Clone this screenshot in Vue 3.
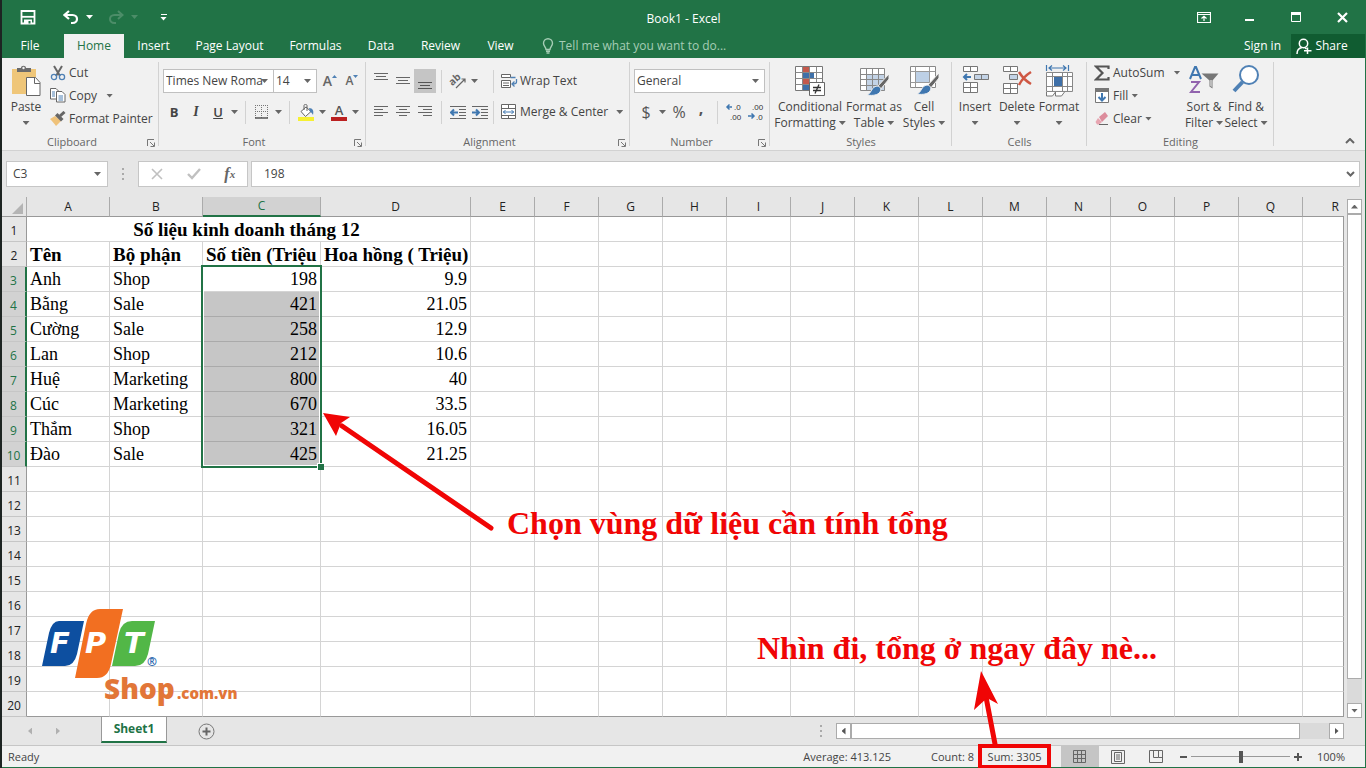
<script setup>
import { ref } from 'vue'

const tabs = ['File', 'Home', 'Insert', 'Page Layout', 'Formulas', 'Data', 'Review', 'View']
const columns = 'ABCDEFGHIJKLMNOPQR'.split('')
const blankColumns = columns.slice(4)
const people = [
  ['Anh', 'Shop', '198', '9.9'],
  ['Bằng', 'Sale', '421', '21.05'],
  ['Cường', 'Sale', '258', '12.9'],
  ['Lan', 'Shop', '212', '10.6'],
  ['Huệ', 'Marketing', '800', '40'],
  ['Cúc', 'Marketing', '670', '33.5'],
  ['Thắm', 'Shop', '321', '16.05'],
  ['Đào', 'Sale', '425', '21.25'],
]
const emptyRows = Array.from({ length: 10 }, (_, i) => i + 11)
const cellName = ref('C3')
const formula = ref('198')
const zoom = ref(50)
</script>

<template>
  <div class="window">
    <header class="titlebar">
      <div class="quick">
        <button class="q" aria-label="Save">
          <svg width="16" height="16" viewBox="0 0 16 16"><path d="M1.500 2h13v12.500H1.500z" fill="none" stroke="#fff" stroke-width="1.800" /><path d="M2 7.800h12" stroke="#fff" stroke-width="1.800" /><path d="M4 10.500h8v4H4z" fill="#fff" /><path d="M8.500 12h2v2.500h-2z" fill="#217346" /></svg>
        </button>
        <button class="q undo" aria-label="Undo">
          <svg width="16" height="15" viewBox="0 0 16 15"><path d="M6 1 1.500 5 6 9M2 5h7.500c6 0 6 8 0 8H8" fill="none" stroke="#fff" stroke-width="2.200" /></svg>
          <i class="caret light"></i>
        </button>
        <button class="q redo" aria-label="Redo">
          <svg width="16" height="15" viewBox="0 0 16 15"><path d="M10 1l4.500 4L10 9M14 5H6.500c-6 0-6 8 0 8H8" fill="none" stroke="#4c8d68" stroke-width="2" /></svg>
          <i class="caret dim"></i>
        </button>
        <button class="q customize" aria-label="Customize Quick Access Toolbar"><span class="bar"></span><i class="caret light"></i></button>
      </div>
      <div class="title">Book1 - Excel</div>
      <div class="controls">
        <button aria-label="Ribbon display options"><svg width="14" height="11" viewBox="0 0 14 11"><path d="M.5.5h13v10H.500zM.5 2.500h13M7 9V4.500M4.500 6.500 7 4.200l2.500 2.300" fill="none" stroke="#fff" stroke-width="1.200" /></svg></button>
        <button aria-label="Minimize"><svg width="10" height="11" viewBox="0 0 10 11"><path d="M0 8h9" stroke="#fff" stroke-width="2" /></svg></button>
        <button aria-label="Maximize"><svg width="10" height="11" viewBox="0 0 10 11"><path d="M.5.500h9v9h-9zM0 2h10" fill="none" stroke="#fff" /><path d="M0 0h10v3H0z" fill="#fff" /></svg></button>
        <button aria-label="Close"><svg width="11" height="11" viewBox="0 0 11 11"><path d="M1 1l9 9M10 1l-9 9" stroke="#fff" stroke-width="2.200" /></svg></button>
      </div>
    </header>

    <nav class="tabs">
      <button v-for="t in tabs" :key="t" class="tab" :class="[t.toLowerCase().replace(' ', '-'), { active: t === 'Home' }]">{{ t }}</button>
      <button class="tell">
        <svg width="12" height="16" viewBox="0 0 12 16"><path d="M4 11.500C4 9 1.500 8 1.500 5.200a4.500 4.500 0 0 1 9 0C10.500 8 8 9 8 11.500zM4 13.200h4M4.500 15h3" fill="none" stroke="#a5cdb5" stroke-width="1.400" /></svg>
        Tell me what you want to do...
      </button>
      <a href="#" class="signin">Sign in</a>
      <button class="share">
        <svg width="16" height="17" viewBox="0 0 16 17"><circle cx="7.500" cy="5.500" r="4.200" fill="none" stroke="#fff" stroke-width="1.500" /><path d="M1 16c0-4 2-6 5-6.500M9 10l1.500 1M11.500 9.500v6.500M8 12.800h7.500" fill="none" stroke="#fff" stroke-width="1.500" /></svg>
        Share
      </button>
    </nav>

    <section class="ribbon">
      <div class="group clipboard">
        <div class="body">
          <button class="big">
            <svg width="30" height="32" viewBox="0 0 30 32"><path d="M1 4h24v25H1z" fill="#efc679" /><path d="M6 7V3h4c0-3 5-3 5 0h5v4z" fill="#6b6b6b" /><circle cx="12.500" cy="3" r="1.200" fill="#f1f1f1" /><path d="M15.500 12.500h9l4.500 5v13H15.500z" fill="#fff" stroke="#666" /><path d="M23.500 12.500v6H29" fill="none" stroke="#666" /></svg>
            <span>Paste</span><i class="caret"></i>
          </button>
          <div class="stack">
            <button class="line">
              <svg width="16" height="16" viewBox="0 0 16 16"><path d="M4 1l6 10M12 1 6 11" stroke="#666" stroke-width="2" /><circle cx="4" cy="12" r="2.600" fill="none" stroke="#4f81b5" stroke-width="1.300" /><circle cx="12" cy="12" r="2.600" fill="none" stroke="#4f81b5" stroke-width="1.300" /></svg>Cut
            </button>
            <button class="line">
              <svg width="16" height="15" viewBox="0 0 16 15"><path d="M.5.500H6l2.500 2.500v8h-8z" fill="#fff" stroke="#666" /><path d="M6.500 3.500H12l3 3v7.500H6.500z" fill="#fff" stroke="#666" /><path d="M2 4h3M2 6h3M2 8h3M8.500 8h4.500M8.500 10h4.500M8.500 12h4.500" stroke="#4f81b5" /></svg>Copy<i class="caret far"></i>
            </button>
            <button class="line">
              <svg width="16" height="15" viewBox="0 0 16 15"><path d="M0 8l5-3 6 5-5 5C4 12 2 10 0 8z" fill="#efc27a" /><path d="M5 4.500 7.500 2l6 6-2.500 2.500z" fill="#666" /><path d="M10 5l4.500-4" stroke="#666" stroke-width="3" /></svg>Format Painter
            </button>
          </div>
        </div>
        <div class="label">Clipboard<svg class="launch" width="8" height="8" viewBox="0 0 8 8"><path d="M.5 7V.500H7M3 3l4 4M7.500 3.500v4h-4" fill="none" stroke="#777" /></svg></div>
      </div>

      <div class="group font">
        <div class="rows">
          <div class="row">
            <span class="pick family"><select aria-label="Font"><option>Times New Roma</option></select><i class="caret"></i></span>
            <span class="pick size"><select aria-label="Font size"><option>14</option></select><i class="caret"></i></span>
            <button class="ib grow" aria-label="Increase font size"><b>A</b><svg width="5" height="3" viewBox="0 0 5 3"><path d="M0 3h5L2.500 0z" fill="#4f81b5" /></svg></button>
            <button class="ib shrink" aria-label="Decrease font size"><b>A</b><svg width="5" height="3" viewBox="0 0 5 3"><path d="M0 0h5L2.500 3z" fill="#4f81b5" /></svg></button>
          </div>
          <div class="row">
            <button class="ib bold">B</button><button class="ib italic">I</button><button class="ib under">U</button><button class="drop" aria-label="Underline styles"><i class="caret"></i></button>
            <i class="sep"></i>
            <button class="ib" aria-label="Borders"><svg width="14" height="14" viewBox="0 0 14 14"><path d="M.5 0v13M6.500 0v13M12.500 0v13M0 .5h13M0 6.500h13" stroke="#777" stroke-dasharray="1 1" /><path d="M0 13h13" stroke="#555" stroke-width="1.500" /></svg></button><button class="drop" aria-label="Border styles"><i class="caret"></i></button>
            <i class="sep"></i>
            <button class="ib" aria-label="Fill color"><svg width="17" height="17" viewBox="0 0 17 17"><path d="M0 13h16v4H0z" fill="#f6f032" /><path d="M3 7.500 8 3l5 4.500-5.500 5z" fill="#fff" stroke="#666" /><path d="M6 6V1.500c0-1.500 3-1.500 3 0V7" fill="none" stroke="#666" /><path d="M11 4c4 0 5 3 4 7-1-2-2-3-3-3z" fill="#4f81b5" /></svg></button><button class="drop" aria-label="Fill colors"><i class="caret"></i></button>
            <button class="ib" aria-label="Font color"><span class="ink">A</span></button><button class="drop" aria-label="Font colors"><i class="caret"></i></button>
          </div>
        </div>
        <div class="label">Font<svg class="launch" width="8" height="8" viewBox="0 0 8 8"><path d="M.5 7V.500H7M3 3l4 4M7.500 3.500v4h-4" fill="none" stroke="#777" /></svg></div>
      </div>

      <div class="group alignment">
        <div class="rows">
          <div class="row">
            <button class="ib" aria-label="Top align"><svg width="14" height="18" viewBox="0 0 14 18"><path d="M0 1.500h14M2 4.500h10M0 7.500h14" stroke="#666" /></svg></button>
            <button class="ib" aria-label="Middle align"><svg width="14" height="18" viewBox="0 0 14 18"><path d="M0 5.500h14M2 8.500h10M0 11.500h14" stroke="#666" /></svg></button>
            <button class="ib on" aria-label="Bottom align"><svg width="14" height="18" viewBox="0 0 14 18"><path d="M0 10.500h14M2 13.500h10M0 16.500h14" stroke="#555" /></svg></button>
            <i class="sep"></i>
            <button class="ib" aria-label="Orientation"><svg class="open" width="18" height="16" viewBox="0 0 18 16"><text x="1" y="11" transform="rotate(-42 5 9)" font-size="10" font-weight="700" font-family="Open Sans, sans-serif" fill="#666">ab</text><path d="M7 15 16 6M12.500 6H16v3.500" fill="none" stroke="#666" stroke-width="1.200" /></svg></button><button class="drop" aria-label="Orientation options"><i class="caret"></i></button>
            <i class="sep wide"></i>
            <button class="line wrap"><svg width="17" height="17" viewBox="0 0 17 17"><path d="M.5 1.500h9v3h-9zM.5 7.500h9v7h-9z" fill="#fff" stroke="#666" /><path d="M2 10h6M2 12.500h6" stroke="#666" /><path d="M9.500 4.500h5M15.500 6v3c0 1.500-1 2-4 2M13.500 8.500 11 11l2.500 2.500" fill="none" stroke="#4f81b5" stroke-width="1.300" /></svg>Wrap Text</button>
          </div>
          <div class="row">
            <button class="ib" aria-label="Align left"><svg width="14" height="12" viewBox="0 0 14 12"><path d="M0 .5h14M0 3.500h9M0 6.500h14M0 9.500h9" stroke="#666" /></svg></button>
            <button class="ib" aria-label="Center"><svg width="14" height="12" viewBox="0 0 14 12"><path d="M0 .5h14M3 3.500h8M0 6.500h14M3 9.500h8" stroke="#666" /></svg></button>
            <button class="ib" aria-label="Align right"><svg width="14" height="12" viewBox="0 0 14 12"><path d="M0 .5h14M5 3.500h9M0 6.500h14M5 9.500h9" stroke="#666" /></svg></button>
            <i class="sep"></i>
            <button class="ib" aria-label="Decrease indent"><svg width="16" height="13" viewBox="0 0 16 13"><path d="M0 .5h16M9 3.500h7M9 6.500h7M9 9.500h7M0 12.500h16" stroke="#666" /><path d="M1 6.500h7M4 3.500l-3 3 3 3" fill="none" stroke="#3f77b0" stroke-width="2" /></svg></button>
            <button class="ib" aria-label="Increase indent"><svg width="16" height="13" viewBox="0 0 16 13"><path d="M0 .5h16M9 3.500h7M9 6.500h7M9 9.500h7M0 12.500h16" stroke="#666" /><path d="M0 6.500h7M4 3.500l3 3-3 3" fill="none" stroke="#3f77b0" stroke-width="2" /></svg></button>
            <i class="sep blank"></i>
            <button class="line"><svg width="17" height="16" viewBox="0 0 17 16"><path d="M.5.500h14v14H.500zM.5 4.500h14M.5 11.500h14M7.500.5v4M7.500 11.500v3" fill="#fff" stroke="#666" /><path d="M2 8h11M4.500 6 2.500 8l2 2M10.500 6l2 2-2 2" fill="none" stroke="#3f77b0" /></svg>Merge &amp; Center<i class="caret far"></i></button>
          </div>
        </div>
        <div class="label">Alignment<svg class="launch" width="8" height="8" viewBox="0 0 8 8"><path d="M.5 7V.500H7M3 3l4 4M7.500 3.500v4h-4" fill="none" stroke="#777" /></svg></div>
      </div>

      <div class="group number">
        <div class="rows">
          <div class="row"><span class="pick format"><select aria-label="Number format"><option>General</option></select><i class="caret"></i></span></div>
          <div class="row">
            <button class="ib sym">$</button><button class="drop" aria-label="Accounting formats"><i class="caret"></i></button>
            <button class="ib sym">%</button><button class="ib sym comma">,</button>
            <i class="sep"></i>
            <button class="ib" aria-label="Increase decimal"><svg class="open" width="16" height="18" viewBox="0 0 16 18"><g font-family="Liberation Sans, sans-serif" font-size="8" fill="#333"><text x="8" y="7">.0</text><text x="4" y="17">.00</text></g><path d="M6 4H1M3.500 1.500 1 4l2.500 2.500" fill="none" stroke="#3f77b0" stroke-width="1.500" /></svg></button>
            <button class="ib" aria-label="Decrease decimal"><svg class="open" width="16" height="18" viewBox="0 0 16 18"><g font-family="Liberation Sans, sans-serif" font-size="8" fill="#333"><text x="4" y="7">.00</text><text x="8" y="17">.0</text></g><path d="M0 13h6M3.500 10.500 6 13l-2.500 2.500" fill="none" stroke="#3f77b0" stroke-width="1.500" /></svg></button>
          </div>
        </div>
        <div class="label">Number<svg class="launch" width="8" height="8" viewBox="0 0 8 8"><path d="M.5 7V.500H7M3 3l4 4M7.500 3.500v4h-4" fill="none" stroke="#777" /></svg></div>
      </div>

      <div class="group styles">
        <div class="body">
          <button class="big w70">
            <svg width="32" height="32" viewBox="0 0 32 32"><path d="M1.500 1.500h27v24h-27z" fill="#fff" stroke="#777" /><path d="M9 2h6v6H9zM9 14h7v6H9z" fill="#c4594c" /><path d="M9 8h11v6H9z" fill="#3f70a8" /><path d="M9 20h6v5H9z" fill="#3f70a8" /><path d="M1.500 7.500h27M1.500 13.500h27M1.500 19.500h27M8.500 1.500v24M15.500 1.500v24M22.500 1.500v24" stroke="#888" /><path d="M15.500 17.500h15v13h-15z" fill="#fff" stroke="#666" /><path d="M19 22.500h8M19 25.500h8M25 19.500l-4 9" stroke="#333" stroke-width="1.300" /></svg>
            <span>Conditional</span><span>Formatting<i class="caret"></i></span>
          </button>
          <button class="big w56">
            <svg width="32" height="32" viewBox="0 0 32 32"><path d="M2.500 3.500h24v22h-24z" fill="#fff" /><path d="M9 9h18v17H9z" fill="#c3d3e6" /><path d="M2.500 3.500h24v22h-24zM2.500 9.500h24M2.500 14.500h24M2.500 20.500h24M8.500 3.500v22M14.500 3.500v22M20.500 3.500v22" fill="none" stroke="#888" /><path d="M31 9 19 22l3 3 9-11z" fill="#666" stroke="#f1f1f1" /><path d="M19 21c3 0 5 3 3 6-2 3-7 4-13 3 5-2 4-8 10-9z" fill="#3f77b0" stroke="#f1f1f1" /></svg>
            <span>Format as</span><span>Table<i class="caret"></i></span>
          </button>
          <button class="big w42">
            <svg width="32" height="32" viewBox="0 0 32 32"><path d="M2.500 1.500h25v21h-25z" fill="#fff" stroke="#888" /><path d="M2.500 6.500h25M2.500 17.500h25M7.500 1.500v21M21.500 1.500v21" stroke="#999" /><path d="M8 7h13v10H8z" fill="#bdd0e6" /><path d="M31 8 19 21l3 3 9-11z" fill="#666" stroke="#f1f1f1" /><path d="M19 20c3 0 5 3 3 6-2 3-7 4-13 3 5-2 4-8 10-9z" fill="#3f77b0" stroke="#f1f1f1" /></svg>
            <span>Cell</span><span>Styles<i class="caret"></i></span>
          </button>
        </div>
        <div class="label">Styles</div>
      </div>

      <div class="group cells">
        <div class="body">
          <button class="big w42">
            <svg width="28" height="32" viewBox="0 0 28 32"><path d="M2.500 1.500h14v5h-14zM9.500 1.500v5M2.500 17.500h14v10h-14zM2.500 22.500h14M9.500 17.500v10" fill="#fff" stroke="#777" /><path d="M13.500 9.500h14v5h-14zM20.500 9.500v5" fill="#c3d3e6" stroke="#777" /><path d="M3 12h7M6 9l-3 3 3 3" fill="none" stroke="#3f77b0" stroke-width="2" /></svg>
            <span>Insert</span><i class="caret"></i>
          </button>
          <button class="big w42">
            <svg width="30" height="32" viewBox="0 0 30 32"><path d="M1.500 1.500h14v5h-14zM8.500 1.500v5M1.500 18.500h14v10h-14zM1.500 23.500h14M8.500 18.500v10" fill="#fff" stroke="#777" /><path d="M7.500 9.500h8v5h-8z" fill="#c3d3e6" stroke="#777" /><path d="M17 7c3 5 7 9 12 12M29 7c-5 3-9 7-12 13" fill="none" stroke="#cf5743" stroke-width="2.500" /></svg>
            <span>Delete</span><i class="caret"></i>
          </button>
          <button class="big w42">
            <svg width="30" height="32" viewBox="0 0 30 32"><path d="M2.500 7.500h26v18h-26z" fill="#fff" /><path d="M10 12h8v9h-8z" fill="#3f70a8" /><path d="M2.500 7.500h26v19h-26zM2.500 11.500h26M2.500 21.500h26M8.500 7.500v19M18.500 7.500v19M23.500 7.500v19" fill="none" stroke="#888" /><path d="M2.500 27v4h6l3-4v4h6l3-4" fill="#fff" stroke="#777" /><path d="M2.500 0v6M24.500 0v6M5 3h17M8 .5 5 3l3 2.500M19 .5 22 3l-3 2.500" fill="none" stroke="#3f77b0" stroke-width="1.200" /></svg>
            <span>Format</span><i class="caret"></i>
          </button>
        </div>
        <div class="label">Cells</div>
      </div>

      <div class="group editing">
        <div class="body">
          <div class="stack">
            <button class="line"><svg width="16" height="16" viewBox="0 0 16 16"><path d="M14.500 4V1.500H2L8.500 8 2 14.500h12.500V12" fill="none" stroke="#555" stroke-width="2.200" /></svg>AutoSum<i class="caret far"></i></button>
            <button class="line"><svg width="16" height="16" viewBox="0 0 16 16"><path d="M1.500.5h13v14h-13z" fill="#fff" stroke="#777" /><path d="M1 0h14v4H1z" fill="#777" /><path d="M8 5v7M4.500 9 8 12.500 11.500 9" fill="none" stroke="#3f77b0" stroke-width="2" /></svg>Fill<i class="caret"></i></button>
            <button class="line"><svg width="16" height="16" viewBox="0 0 16 16"><path d="M5 6l6-5 3 4-6 6z" fill="#dc8c9c" /><path d="M4 7l4 4-3 2.500H3L1.500 11z" fill="#e7a5b1" /><path d="M5 13.500h9" stroke="#666" /></svg>Clear<i class="caret"></i></button>
          </div>
          <button class="big w42">
            <svg width="30" height="32" viewBox="0 0 30 32"><path d="M1 14 6 2h1l5 12M3 10h7" fill="none" stroke="#3f77b0" stroke-width="2" /><path d="M2 17h8L2 27h9" fill="none" stroke="#9163ad" stroke-width="2" /><path d="M12.500 8.500h17l-6 7v8l-3-2v-6z" fill="#777" /><path d="M21.500 15v6l1 1v-7z" fill="#fff" /></svg>
            <span>Sort &amp;</span><span>Filter<i class="caret"></i></span>
          </button>
          <button class="big w42">
            <svg width="30" height="32" viewBox="0 0 30 32"><circle cx="18" cy="10" r="9" fill="#fff" stroke="#4f81b5" stroke-width="2" /><path d="M11.500 17 3 26" stroke="#4f81b5" stroke-width="4" /></svg>
            <span>Find &amp;</span><span>Select<i class="caret"></i></span>
          </button>
        </div>
        <div class="label">Editing</div>
      </div>
      <button class="collapse" aria-label="Collapse the ribbon"><svg width="10" height="6" viewBox="0 0 10 6"><path d="M1 5l4-4 4 4" fill="none" stroke="#666" stroke-width="2" /></svg></button>
    </section>

    <section class="formula-row">
      <label class="namebox"><input v-model="cellName" aria-label="Name box" /><i class="caret"></i></label>
      <span class="dots"></span>
      <div class="fx">
        <button aria-label="Cancel"><svg width="12" height="12" viewBox="0 0 12 12"><path d="M1 1l10 10M11 1 1 11" stroke="#c0c0c0" stroke-width="1.600" /></svg></button>
        <button aria-label="Enter"><svg width="14" height="12" viewBox="0 0 14 12"><path d="M1 6l4 4 8-9" fill="none" stroke="#c0c0c0" stroke-width="2.400" /></svg></button>
        <button class="fn" aria-label="Insert function">f<small>x</small></button>
      </div>
      <label class="formula"><input v-model="formula" aria-label="Formula bar" /><svg width="9" height="6" viewBox="0 0 9 6"><path d="M1 1l3.500 3.500L8 1" fill="none" stroke="#666" stroke-width="2" /></svg></label>
    </section>

    <main class="sheet">
      <div class="grid-wrap">
        <table>
          <colgroup><col class="c-head" /><col class="c-a" /><col class="c-b" /><col class="c-c" /><col class="c-d" /><col v-for="n in 13" :key="n" class="c-std" /><col /></colgroup>
          <thead>
            <tr><th class="corner"><svg width="13" height="13" viewBox="0 0 13 13"><path d="M12 1v11H1z" fill="#b4b4b4" /></svg></th><th v-for="c in columns" :key="c" :class="{ sel: c === 'C', last: c === 'R' }">{{ c }}</th></tr>
          </thead>
          <tbody>
            <tr><th>1</th><td colspan="4" class="heading">Số liệu kinh doanh tháng 12</td><td v-for="c in blankColumns" :key="c"></td></tr>
            <tr class="names"><th>2</th><td>Tên</td><td>Bộ phận</td><td>Số tiền (Triệu</td><td>Hoa hồng ( Triệu)</td><td v-for="c in blankColumns" :key="c"></td></tr>
            <tr v-for="(p, i) in people" :key="p[0]">
              <th class="sel">{{ i + 3 }}</th><td>{{ p[0] }}</td><td>{{ p[1] }}</td><td class="num" :class="{ picked: i > 0 }">{{ p[2] }}</td><td class="num">{{ p[3] }}</td><td v-for="c in blankColumns" :key="c"></td>
            </tr>
            <tr v-for="n in emptyRows" :key="n"><th>{{ n }}</th><td v-for="c in columns" :key="c"></td></tr>
          </tbody>
        </table>
        <div class="selection"></div>
        <svg class="logo" width="200" height="102" viewBox="0 0 200 102">
          <path d="M14 13h28l-7 33q-3 12-12 12H0l7-33Q10 13 17 13z" fill="#0d4fa0" />
          <path d="M57 1h24L69 56q-3 14-14 14H33L44 16Q47 1 58 1z" fill="#f26f21" />
          <path d="M90 13h23l-7 33q-3 12-13 12H70l7-33q3-12 13-12z" fill="#52b747" />
          <g font-family="DejaVu Sans, sans-serif" font-size="29" font-weight="700" font-style="italic" fill="#fff"><text x="8" y="45">F</text><text x="43" y="45">P</text><text x="82" y="45">T</text></g>
          <text x="105" y="58" font-family="Open Sans, sans-serif" font-size="12" font-weight="700" fill="#2f6ab0">®</text>
          <g font-family="Open Sans, sans-serif" font-weight="800" fill="#e27638"><text x="62" y="91" font-size="28">Shop</text><text x="135" y="91" font-size="15">.com.vn</text></g>
        </svg>
        <p class="note first">Chọn vùng dữ liệu cần tính tổng</p>
        <p class="note second">Nhìn đi, tổng ở ngay đây nè...</p>
        <svg class="arrows" width="1000" height="550" viewBox="0 0 1000 550"><path d="M489 331 340 229M993 547 984 500" stroke="#f00505" stroke-width="5" stroke-linecap="round" /><path d="M321 216l27 4-9 6-5 13zM979 474l17 33-11-6-13 12z" fill="#f00505" /></svg>
      </div>
      <div class="vscroll"><button aria-label="Scroll up"><i class="caret up"></i></button><span class="thumb"></span><button aria-label="Scroll down"><i class="caret"></i></button></div>
    </main>

    <section class="sheets">
      <button class="nav" aria-label="Previous sheet"><i class="tri left"></i></button>
      <button class="nav" aria-label="Next sheet"><i class="tri right"></i></button>
      <button class="sheet-tab">Sheet1</button>
      <button class="add" aria-label="New sheet"><svg width="17" height="17" viewBox="0 0 17 17"><circle cx="8.500" cy="8.500" r="7.500" fill="none" stroke="#777" /><path d="M8.500 4.500v8M4.500 8.500h8" stroke="#666" stroke-width="2" /></svg></button>
      <span class="dots"></span>
      <div class="hscroll"><button aria-label="Scroll left"><i class="tri left dark"></i></button><span class="thumb"></span><button aria-label="Scroll right"><i class="tri right dark"></i></button></div>
    </section>

    <footer class="status">
      <span class="ready">Ready</span><span>Average: 413.125</span><span class="count">Count: 8</span><span class="sum">Sum: 3305</span>
      <div class="views">
        <button class="on" aria-label="Normal"><svg width="14" height="14" viewBox="0 0 14 14"><path d="M.5.500h12v12H.500zM4.500.5v12M8.500.5v12M.5 4.500h12M.5 8.500h12" fill="none" stroke="#666" /></svg></button>
        <button aria-label="Page layout"><svg width="14" height="14" viewBox="0 0 14 14"><path d="M.5.500h13v13H.500zM3.500 2.500h7v9h-7z" fill="none" stroke="#666" /><path d="M5 5h4M5 7h4M5 9h4" stroke="#666" /></svg></button>
        <button aria-label="Page break preview"><svg width="14" height="14" viewBox="0 0 14 14"><path d="M.5.500h13v12H.500zM4.500.5v7h5v-7M9.500 7.500h4" fill="none" stroke="#666" /></svg></button>
      </div>
      <button class="zoom minus" aria-label="Zoom out"></button>
      <input v-model="zoom" type="range" min="0" max="100" aria-label="Zoom" />
      <button class="zoom plus" aria-label="Zoom in"></button>
      <span class="pct">100%</span>
    </footer>
  </div>
</template>

<style>
body { margin: 0; background: #e6e6e6; }
</style>

<style scoped>
.window { box-sizing: border-box; border-left: 2px solid #1d2422; border-right: 1px solid #217346; font: 12px/16px "Open Sans", "Noto Sans", sans-serif; color: #444; }
.window * { box-sizing: border-box; }
button, input, select { font: inherit; color: inherit; }
button { border: 0; padding: 0; margin: 0; background: none; display: flex; align-items: center; justify-content: center; white-space: nowrap; }
svg { display: block; flex: none; }
.open { overflow: visible; }
.caret { flex: none; display: inline-block; width: 7px; height: 4px; background: #666; clip-path: polygon(0 0, 100% 0, 50% 100%); }
.caret.up { clip-path: polygon(50% 0, 100% 100%, 0 100%); }
.caret.light { background: #fff; }
.caret.dim { background: #4c8d68; }

.titlebar { height: 34px; background: #217346; display: grid; grid-template-columns: 1fr auto 1fr; align-items: center; color: #fff; }
.quick { display: flex; align-items: center; padding-left: 18px; }
.q { gap: 7px; }
.undo { margin-left: 27px; }
.redo { margin-left: 15px; }
.customize { flex-direction: column; gap: 2px; margin-left: 22px; }
.bar { width: 6px; height: 1px; background: #fff; }
.title { padding-top: 4px; }
.controls { display: flex; justify-content: flex-end; }
.controls button { width: 46px; height: 34px; }

.tabs { height: 24px; background: #217346; display: flex; color: #fff; }
.tab { padding: 0 14px; height: 24px; }
.tab.file { width: 56px; margin-right: 6px; }
.tab.home { width: 60px; }
.tab.insert { width: 59px; padding: 0; }
.tab.page-layout { width: 93px; padding: 0; }
.tab.formulas { width: 79px; padding: 0; }
.tab.data { width: 52px; padding: 0; }
.tab.review { width: 67px; padding: 0; }
.tab.view { width: 53px; padding: 0; }
.tab.active { background: #f1f1f1; color: #217346; }
.tell { margin-left: 15px; gap: 5px; color: #a5cdb5; }
.signin { margin-left: auto; margin-right: 10px; line-height: 24px; color: #fff; text-decoration: none; }
.share { width: 74px; padding-right: 12px; gap: 3px; background: #105c31; }

.ribbon { background: #f1f1f1; border-bottom: 1px solid #d2d2d2; padding-top: 4px; display: flex; position: relative; }
.group { height: 88px; display: flex; flex-direction: column; background: linear-gradient(#d2d2d2, #d2d2d2) right top / 1px 84px no-repeat; flex: none; }
.clipboard { width: 157px; }
.font { width: 207px; }
.alignment { width: 264px; }
.number { width: 140px; }
.styles { width: 182px; }
.cells { width: 135px; }
.editing { width: 187px; }
.label { height: 16px; line-height: 16px; font-size: 11px; color: #666; text-align: center; position: relative; padding-right: 17px; }
.styles .label, .cells .label, .editing .label { padding-right: 0; }
.launch { position: absolute; right: 4px; top: 5px; }
.body { height: 72px; display: flex; }
.rows { height: 72px; padding-top: 7px; display: flex; flex-direction: column; gap: 7px; }
.row { display: flex; align-items: center; height: 24px; }
.big { flex-direction: column; justify-content: flex-start; padding-top: 3px; width: 42px; }
.big svg { margin-bottom: 2px; }
.big span { line-height: 16px; display: flex; align-items: center; gap: 3px; }
.big > .caret { margin-top: 6px; }
.clipboard .big { margin-left: 3px; }
.w70 { width: 70px; }
.w56 { width: 58px; }
.styles .body { padding-left: 5px; }
.cells .body { padding-left: 2px; }
.editing .body { padding-left: 7px; }
.stack { display: flex; flex-direction: column; align-items: flex-start; gap: 2px; }
.editing .stack { width: 89px; }
.line { height: 21px; gap: 3px; }
.clipboard .stack { margin-left: 3px; }
.clipboard .far { margin-left: 6px; }
.alignment .line { gap: 2px; }
.alignment .far { margin-left: 6px; }
.editing .far { margin-left: 6px; }
.pick { display: grid; grid-template-columns: 1fr 12px; align-items: center; height: 24px; border: 1px solid #c0c0c0; background: #fff; }
.pick select { grid-area: 1 / 1 / 2 / 3; appearance: none; border: 0; background: none; padding: 0 0 0 2px; margin: 0; height: 20px; width: 100%; min-width: 0; }
.pick .caret { grid-area: 1 / 2; }
.family { width: 111px; margin-left: 4px; }
.size { width: 44px; margin-left: -1px; margin-right: 2px; }
.format { width: 131px; margin-left: 4px; }
.ib { width: 22px; height: 24px; flex: none; }
.on { background: #c5c5c5; }
.grow b { font-size: 14px; }
.shrink b { font-size: 12px; }
.grow b, .shrink b { font-weight: 600; color: #666; }
.grow svg, .shrink svg { margin-bottom: 10px; }
.bold { font-weight: 700; font-size: 13px; margin-left: 4px; }
.italic { font: italic 700 14px "Liberation Serif", serif; }
.under { font-weight: 600; text-decoration: underline; font-size: 13px; }
.drop { width: 11px; height: 24px; }
.sep { width: 1px; height: 23px; background: #d2d2d2; margin: 0 5px; }
.wide { margin: 0 7px 0 13px; }
.blank { margin: 0 7px 0 2px; }
.alignment .row { padding-left: 4px; }
.ink { font-weight: 600; font-size: 13px; line-height: 13px; width: 16px; border-bottom: 4px solid #bb2020; color: #555; }
.sym { font-size: 16px; color: #555; }
.number .row > .sym:first-child { margin-left: 5px; }
.comma { font-weight: 700; padding-bottom: 8px; }
.collapse { position: absolute; right: 9px; bottom: 4px; width: 12px; height: 10px; }

.formula-row { height: 46px; padding: 10px 5px 10px 4px; display: flex; align-items: center; background: #e6e6e6; }
.namebox, .fx, .formula { display: flex; align-items: center; height: 26px; border: 1px solid #c6c6c6; background: #fff; }
.namebox { width: 102px; padding: 0 6px; }
.namebox input, .formula input { border: 0; padding: 0; background: none; min-width: 0; flex: 1; outline: 0; }
.dots { width: 2px; height: 12px; margin: 0 14px; background: repeating-linear-gradient(#aaa 0 2px, transparent 2px 5px); }
.fx { width: 110px; justify-content: space-around; margin-right: 3px; }
.fn { font: italic 700 16px "Liberation Serif", serif; color: #666; }
.fn small { font-size: 11px; }
.formula { flex: 1; padding: 0 4px 0 12px; }

.sheet { display: flex; background: #e6e6e6; }
.grid-wrap { flex: 1; min-width: 0; position: relative; }
table { width: 100%; table-layout: fixed; border-collapse: separate; border-spacing: 0; background: #fff; }
.c-head { width: 25px; }
.c-a { width: 83px; }
.c-b { width: 93px; }
.c-c { width: 118px; }
.c-d { width: 150px; }
.c-std { width: 64px; }
th { font-weight: 400; color: #222; background: #e6e6e6; padding: 0; overflow: hidden; }
thead th { height: 20px; line-height: 19px; border-bottom: 1px solid #999; border-right: 1px solid #ababab; }
thead .sel { background: #d2d2d2; color: #217346; border-bottom: 2px solid #217346; line-height: 18px; }
thead .last { text-align: right; padding-right: 5px; border-right: 0; }
.corner svg { margin: 3px 0 0 9px; }
tbody th { border-right: 1px solid #999; border-bottom: 1px solid #c6c6c6; padding-top: 3px; }
tbody .sel { background: #d2d2d2; color: #217346; border-right: 2px solid #217346; }
td { height: 25px; padding: 1px 3px 0; border-right: 1px solid #d4d4d4; border-bottom: 1px solid #d4d4d4; font: 18px/23px "Liberation Serif", serif; color: #000; white-space: nowrap; overflow: hidden; }
td:last-child { border-right-color: #999; }
tbody tr:last-child td { border-bottom-color: #999; }
.heading { font-size: 19px; font-weight: 700; text-align: center; padding-right: 7px; }
.names td { font-size: 19px; font-weight: 700; }
.num { text-align: right; }
.picked { background: #c6c6c6; border-bottom-color: #aaa; }
.selection { position: absolute; left: 199px; top: 68px; width: 121px; height: 203px; border: 2px solid #217346; box-shadow: inset 0 0 0 1px #fff; }
.selection::after { content: ""; position: absolute; right: -4px; bottom: -4px; width: 6px; height: 6px; background: #217346; border: solid #fff; border-width: 1px 0 0 1px; }
.logo { position: absolute; left: 40px; top: 411px; overflow: visible; }
.note { position: absolute; margin: 0; font: 700 32px/36px "Liberation Serif", serif; color: #f00505; white-space: nowrap; }
.first { left: 505px; top: 308px; }
.second { left: 755px; top: 433px; }
.arrows { position: absolute; left: 0; top: 0; pointer-events: none; z-index: 2; overflow: visible; }
.vscroll { width: 15px; margin: 2px 3px -1px 3px; display: flex; flex-direction: column; background: #dadada; }
.vscroll button { height: 15px; border: 1px solid #ababab; background: #fff; }
.vscroll .thumb { height: 465px; margin-bottom: auto; border: 1px solid #ababab; background: #fff; }

.sheets { height: 28px; display: flex; align-items: center; background: #e6e6e6; }
.nav { width: 28px; }
.nav:first-child { margin-left: 14px; }
.tri { width: 4px; height: 7px; background: #b0b0b0; }
.tri.left { clip-path: polygon(100% 0, 100% 100%, 0 50%); }
.tri.right { clip-path: polygon(0 0, 100% 50%, 0 100%); }
.tri.dark { background: #555; }
.sheet-tab { align-self: flex-start; width: 66px; height: 26px; margin-left: 29px; background: #fff; border: solid #999; border-width: 0 1px; border-bottom: 2px solid #217346; color: #217346; font-weight: 700; }
.add { margin-left: 31px; margin-right: auto; }
.hscroll { width: 508px; height: 16px; display: flex; margin-right: 21px; background: #dadada; }
.hscroll button { width: 15px; border: 1px solid #ababab; background: #fff; }
.hscroll .thumb { width: 449px; border: 1px solid #ababab; margin-right: auto; background: #fff; }

.status { height: 23px; display: flex; align-items: center; background: #f1f1f1; border-top: 1px solid #c6c6c6; border-bottom: 1px solid #217346; font-size: 11px; }
.ready { margin: 0 auto 0 6px; }
.count { margin: 0 4px 0 40px; }
.sum { width: 73px; height: 25px; line-height: 17px; border: 4px solid #f00505; text-align: center; }
.views { display: flex; align-self: stretch; margin-left: 10px; }
.views button { width: 38px; }
.zoom { width: 8px; height: 8px; margin: 0 4px; background: linear-gradient(#555, #555) center / 7px 2px no-repeat; }
.plus { background: linear-gradient(#555, #555) center / 8px 2px no-repeat, linear-gradient(#555, #555) center / 2px 8px no-repeat; }
.status input { appearance: none; width: 99px; height: 12px; margin: 0; background: linear-gradient(#999, #999) center / 100% 1px no-repeat; }
.status input::-webkit-slider-thumb { appearance: none; width: 4px; height: 12px; background: #555; }
.pct { margin: 0 20px 0 11px; }
</style>
